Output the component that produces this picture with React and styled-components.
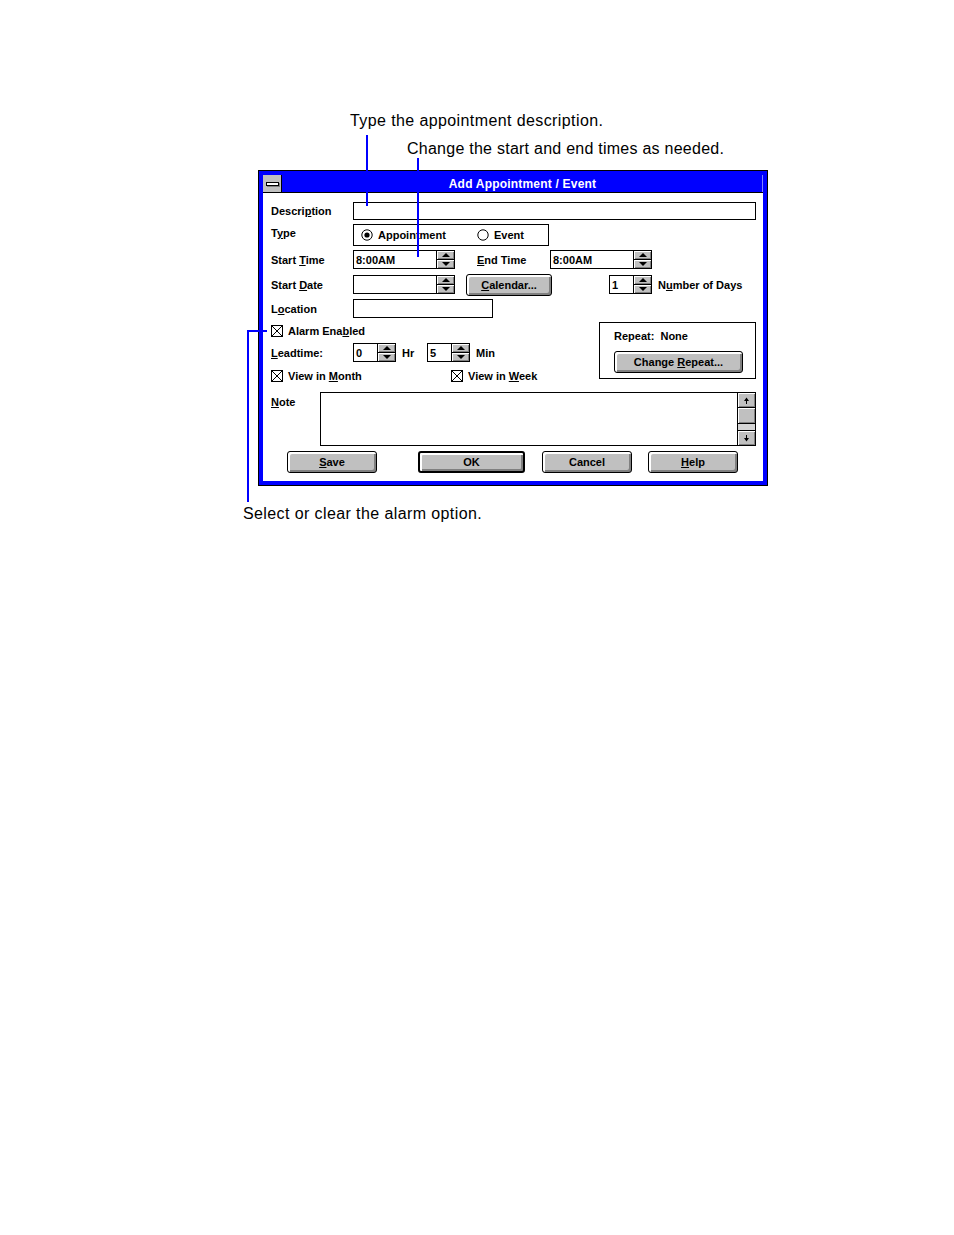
import React from 'react';
import styled, { createGlobalStyle } from 'styled-components';

const Global = createGlobalStyle`
  html, body { margin: 0; padding: 0; background: #fff; }
  body { font-family: "Liberation Sans", Arial, sans-serif; color: #000; }
`;

const Page = styled.div`
  position: relative;
  width: 954px;
  height: 1235px;
  background: #fff;
  overflow: hidden;
`;

const Figure = styled.div`
  padding-top: 112px;
  padding-left: 243px;
`;

const Caption = styled.div`
  font-size: 16px;
  letter-spacing: ${p => p.$ls ?? 0.4}px;
  line-height: 18px;
  white-space: nowrap;
  margin-left: ${p => p.$indent || 0}px;
  margin-top: ${p => p.$top || 0}px;
`;

const Gap = styled.div`
  height: ${p => p.$h}px;
`;

const Leader = styled.div`
  position: absolute;
  background: #0000ff;
  left: ${p => p.$x}px;
  top: ${p => p.$y}px;
  width: ${p => p.$w}px;
  height: ${p => p.$h}px;
`;

const Window = styled.div`
  box-sizing: border-box;
  width: 510px;
  margin-left: 15px;
  border: 1px solid #000;
  background: #0000ff;
  padding: 4px;
`;

const TitleBar = styled.div`
  display: flex;
  height: 17px;
  background: #0000ff;
  border-bottom: 1px solid #000;
  box-shadow: inset -1px 0 0 #8080ff;
`;

const SysBox = styled.div`
  width: 18px;
  background: #c0c0c0;
  border-right: 1px solid #000;
  display: flex;
  align-items: center;
  justify-content: center;
`;

const SysBar = styled.div`
  box-sizing: border-box;
  width: 13px;
  height: 4px;
  border: 1px solid #000;
  background: #fff;
  box-shadow: 1px 1px 0 #808080;
`;

const Title = styled.div`
  flex: 1;
  color: #fff;
  font-weight: bold;
  font-size: 12px;
  letter-spacing: 0.2px;
  display: flex;
  align-items: center;
  justify-content: center;
`;

const Body = styled.div`
  background: #fff;
  padding: 9px 7px 8px 8px;
  height: 288px;
  box-sizing: border-box;
`;

const Row = styled.div`
  display: flex;
  align-items: ${p => p.$align || 'center'};
  height: ${p => p.$h}px;
  margin-top: ${p => p.$mt || 0}px;
  padding-left: ${p => p.$pl || 0}px;
`;

const Label = styled.div`
  box-sizing: border-box;
  width: ${p => (p.$w ? `${p.$w}px` : 'auto')};
  margin-left: ${p => p.$ml || 0}px;
  padding-top: ${p => p.$pt || 0}px;
  font-size: 11px;
  font-weight: bold;
  white-space: nowrap;
  align-self: ${p => p.$self || 'auto'};
`;

const U = styled.span`
  text-decoration: underline;
  text-underline-offset: 1px;
`;

const Field = styled.div`
  box-sizing: border-box;
  width: ${p => p.$w}px;
  height: ${p => p.$h || 19}px;
  margin-left: ${p => p.$ml || 0}px;
  border: 1px solid #000;
  background: #fff;
  font-size: 11px;
  font-weight: bold;
  padding-left: 2px;
  display: flex;
  align-items: center;
`;

const SpinWrap = styled.div`
  box-sizing: border-box;
  width: 18px;
  height: 19px;
  border: 1px solid #000;
  border-left: none;
  display: flex;
  flex-direction: column;
  background: #c0c0c0;
`;

const SpinHalf = styled.div`
  flex: 1;
  display: flex;
  align-items: center;
  justify-content: center;
  box-shadow: inset 1px 1px 0 #fff, inset -1px -1px 0 #808080;
  border-top: ${p => (p.$bottom ? '1px solid #000' : 'none')};
`;

const Tri = styled.div`
  width: 0;
  height: 0;
  border-left: 4px solid transparent;
  border-right: 4px solid transparent;
  ${p => (p.$down ? 'border-top: 4px solid #000;' : 'border-bottom: 4px solid #000;')}
`;

const Spin = () => (
  <SpinWrap>
    <SpinHalf><Tri /></SpinHalf>
    <SpinHalf $bottom><Tri $down /></SpinHalf>
  </SpinWrap>
);

const GroupBox = styled.div`
  box-sizing: border-box;
  width: 196px;
  height: 22px;
  border: 1px solid #000;
  display: flex;
  align-items: center;
  padding-left: 7px;
`;

const RadioItem = styled.div`
  display: flex;
  align-items: center;
  gap: 5px;
  width: ${p => (p.$w ? `${p.$w}px` : 'auto')};
  font-size: 11px;
  font-weight: bold;
`;

const Radio = ({ on }) => (
  <svg width="12" height="12" viewBox="0 0 12 12">
    <circle cx="6" cy="6" r="5.2" fill="#fff" stroke="#000" strokeWidth="1" />
    {on && <circle cx="6" cy="6" r="2.6" fill="#000" />}
  </svg>
);

const Check = () => (
  <svg width="12" height="12" viewBox="0 0 12 12">
    <rect x="0.5" y="0.5" width="11" height="11" fill="#fff" stroke="#000" />
    <path d="M1 1 L11 11 M11 1 L1 11" stroke="#000" strokeWidth="1" />
  </svg>
);

const Button = styled.div`
  box-sizing: border-box;
  width: ${p => p.$w}px;
  height: 22px;
  margin-left: ${p => p.$ml || 0}px;
  margin-top: ${p => p.$mt || 0}px;
  border: ${p => (p.$default ? 2 : 1)}px solid #000;
  border-radius: 3px;
  background: #c0c0c0;
  box-shadow: inset 1px 1px 0 #fff, inset 2px 2px 0 #fff, inset -1px -1px 0 #808080, inset -2px -2px 0 #808080;
  font-size: 11px;
  font-weight: bold;
  display: flex;
  align-items: center;
  justify-content: center;
  white-space: nowrap;
`;

const Lower = styled.div`
  display: flex;
  margin-top: 4px;
  height: 62px;
`;

const LeftCol = styled.div`
  width: 328px;
  display: flex;
  flex-direction: column;
`;

const RepeatBox = styled.div`
  box-sizing: border-box;
  width: 157px;
  height: 57px;
  border: 1px solid #000;
  padding: 6px 0 0 14px;
  display: flex;
  flex-direction: column;
`;

const RepeatText = styled.div`
  font-size: 11px;
  font-weight: bold;
  height: 14px;
  line-height: 14px;
  white-space: pre;
`;

const NoteArea = styled.div`
  box-sizing: border-box;
  width: 436px;
  height: 54px;
  border: 1px solid #000;
  display: flex;
  justify-content: flex-end;
`;

const ScrollBar = styled.div`
  width: 17px;
  border-left: 1px solid #000;
  display: flex;
  flex-direction: column;
  background: #c0c0c0;
`;

const ScrollBtn = styled.div`
  height: 14px;
  display: flex;
  align-items: center;
  justify-content: center;
  background: #c0c0c0;
  box-shadow: inset 1px 1px 0 #fff, inset -1px -1px 0 #808080;
  border-bottom: ${p => (p.$top ? '1px solid #000' : 'none')};
  border-top: ${p => (p.$bottom ? '1px solid #000' : 'none')};
`;

const Thumb = styled.div`
  height: 15px;
  background: #c0c0c0;
  box-shadow: inset 1px 1px 0 #fff, inset -1px -1px 0 #808080;
  border-bottom: 1px solid #000;
`;

const Track = styled.div`
  flex: 1;
  background: #d4d4d4;
`;

const Arrow = ({ down }) => (
  <svg width="7" height="7" viewBox="0 0 7 7">
    {down ? (
      <path d="M3 0 H4 V3 H6 L3.5 6.5 L1 3 H3 Z" fill="#000" />
    ) : (
      <path d="M3.5 0.5 L6 4 H4 V7 H3 V4 H1 Z" fill="#000" />
    )}
  </svg>
);

export default function App() {
  return (
    <Page>
      <Global />
      <Figure>
        <Caption $indent={107}>Type the appointment description.</Caption>
        <Caption $indent={164} $top={10} $ls={0.25}>Change the start and end times as needed.</Caption>
        <Gap $h={12} />
        <Window>
          <TitleBar>
            <SysBox><SysBar /></SysBox>
            <Title>Add Appointment / Event</Title>
          </TitleBar>
          <Body>
            <Row $h={18}>
              <Label $w={82}>Descri<U>p</U>tion</Label>
              <Field $w={403} $h={18} />
            </Row>
            <Row $h={22} $mt={4}>
              <Label $w={82} $self="flex-start" $pt={3}>T<U>y</U>pe</Label>
              <GroupBox>
                <RadioItem $w={116}><Radio on /><span>Appointment</span></RadioItem>
                <RadioItem><Radio /><span>Event</span></RadioItem>
              </GroupBox>
            </Row>
            <Row $h={19} $mt={4}>
              <Label $w={82}>Start <U>T</U>ime</Label>
              <Field $w={84}>8:00AM</Field>
              <Spin />
              <Label $w={73} $ml={22}><U>E</U>nd Time</Label>
              <Field $w={84}>8:00AM</Field>
              <Spin />
            </Row>
            <Row $h={21} $mt={5}>
              <Label $w={82}>Start <U>D</U>ate</Label>
              <Field $w={84} />
              <Spin />
              <Button $w={86} $ml={11}><span><U>C</U>alendar...</span></Button>
              <Field $w={25} $ml={57}>1</Field>
              <Spin />
              <Label $ml={6}>N<U>u</U>mber of Days</Label>
            </Row>
            <Row $h={19} $mt={4}>
              <Label $w={82}>L<U>o</U>cation</Label>
              <Field $w={140} />
            </Row>
            <Lower>
              <LeftCol>
                <Row $h={18}>
                  <Check />
                  <Label $ml={5}>Alarm Ena<U>b</U>led</Label>
                </Row>
                <Row $h={19} $mt={3}>
                  <Label $w={82}><U>L</U>eadtime:</Label>
                  <Field $w={25}>0</Field>
                  <Spin />
                  <Label $w={25} $ml={6}>Hr</Label>
                  <Field $w={25}>5</Field>
                  <Spin />
                  <Label $ml={6}>Min</Label>
                </Row>
                <Row $h={16} $mt={6}>
                  <Check />
                  <Label $w={163} $ml={5}>View in <U>M</U>onth</Label>
                  <Check />
                  <Label $ml={5}>View in <U>W</U>eek</Label>
                </Row>
              </LeftCol>
              <RepeatBox>
                <RepeatText>Repeat:  None</RepeatText>
                <Button $w={129} $mt={8}><span>Change <U>R</U>epeat...</span></Button>
              </RepeatBox>
            </Lower>
            <Row $h={54} $mt={8} $align="flex-start">
              <Label $w={49} $pt={4}><U>N</U>ote</Label>
              <NoteArea>
                <ScrollBar>
                  <ScrollBtn $top><Arrow /></ScrollBtn>
                  <Thumb />
                  <Track />
                  <ScrollBtn $bottom><Arrow down /></ScrollBtn>
                </ScrollBar>
              </NoteArea>
            </Row>
            <Row $h={22} $mt={5} $pl={16}>
              <Button $w={90}><span><U>S</U>ave</span></Button>
              <Button $w={107} $ml={41} $default><span>OK</span></Button>
              <Button $w={90} $ml={17}><span>Cancel</span></Button>
              <Button $w={90} $ml={16}><span><U>H</U>elp</span></Button>
            </Row>
          </Body>
        </Window>
        <Caption $top={19}>Select or clear the alarm option.</Caption>
      </Figure>
      <Leader $x={366} $y={135} $w={2} $h={71} />
      <Leader $x={417} $y={158} $w={2} $h={99} />
      <Leader $x={247} $y={330} $w={2} $h={172} />
      <Leader $x={247} $y={330} $w={20} $h={2} />
    </Page>
  );
}
